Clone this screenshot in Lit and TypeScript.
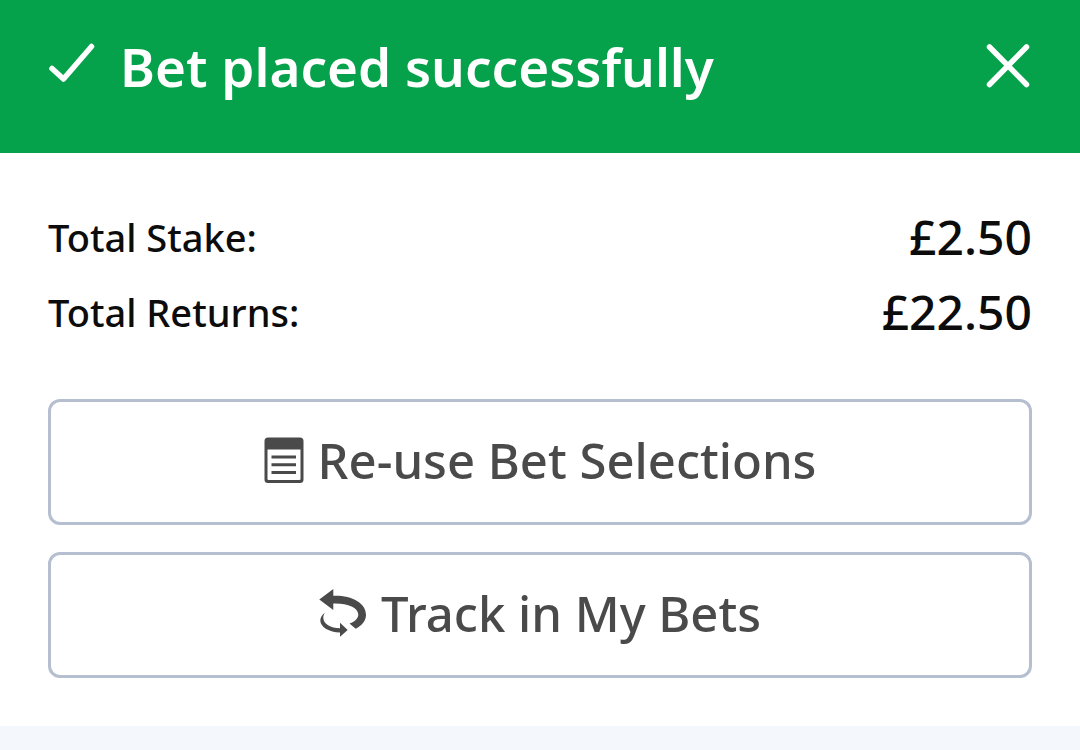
import { LitElement, html, css } from "lit";
import { customElement } from "lit/decorators.js";

@customElement("app-root")
export class AppRoot extends LitElement {
  static styles = css`
    :host {
      display: block;
      min-height: 100vh;
      background: #f4f8fd;
      font-family: "Noto Sans", "Open Sans", sans-serif;
      font-weight: 500;
    }
    svg {
      display: block;
      flex: none;
    }
    .header {
      display: flex;
      align-items: flex-start;
      padding: 31px 48px 50px;
      background: #06a14b;
      color: #fff;
    }
    .title {
      flex: 1;
      margin: 0 0 0 24px;
      font-size: 53px;
      line-height: 72px;
      font-weight: 600;
      white-space: nowrap;
    }
    .tick {
      margin-top: 9px;
    }
    button {
      font: inherit;
      cursor: pointer;
    }
    .close {
      margin-top: 11px;
      padding: 0;
      border: 0;
      background: none;
      color: inherit;
    }
    .panel {
      padding: 46px 48px 48px;
      background: #fff;
    }
    .totals {
      margin: 0 0 50px;
      color: #0c0c0c;
    }
    .row {
      display: flex;
      justify-content: space-between;
      align-items: center;
      height: 75px;
    }
    .label {
      font-size: 38px;
      line-height: 52px;
    }
    .value {
      margin: 0;
      font-size: 48px;
      line-height: 64px;
    }
    .actions {
      display: grid;
      gap: 27px;
    }
    .action {
      display: flex;
      align-items: center;
      justify-content: center;
      gap: 14px;
      padding: 25px 24px 29px;
      border: 3px solid #b5bfd0;
      border-radius: 12px;
      background: #fff;
      color: #4a4a4a;
      font-size: 49px;
      line-height: 66px;
      white-space: nowrap;
    }
  `;

  render() {
    return html`
      <header class="header">
        <svg class="tick" width="48" height="48" viewBox="0 0 48 48" fill="none" stroke="currentColor"
          stroke-width="5.500" stroke-linecap="round" stroke-linejoin="round" aria-hidden="true">
          <path d="M4 28.500L15.500 39L43.500 6.500" />
        </svg>
        <h1 class="title">Bet placed successfully</h1>
        <button class="close" type="button" aria-label="Close">
          <svg width="48" height="48" viewBox="0 0 48 48" fill="none" stroke="currentColor"
            stroke-width="5.500" stroke-linecap="round" aria-hidden="true">
            <path d="M5.500 5L42.500 42.500M42.500 5L5.500 42.500" />
          </svg>
        </button>
      </header>
      <main class="panel">
        <dl class="totals">
          <div class="row">
            <dt class="label">Total Stake:</dt>
            <dd class="value">£2.50</dd>
          </div>
          <div class="row">
            <dt class="label">Total Returns:</dt>
            <dd class="value">£22.50</dd>
          </div>
        </dl>
        <div class="actions">
          <button class="action" type="button">
            <svg width="40" height="46" viewBox="0 0 40 46" aria-hidden="true">
              <path fill="currentColor" fill-rule="evenodd"
                d="M4 0.500H36Q39.500 0.500 39.500 4V42.500Q39.500 46 36 46H4Q0.500 46 0.500 42.500V4Q0.500 0.500 4 0.500ZM3.500 12.500V42Q3.500 43 4.500 43H35.500Q36.500 43 36.500 42V12.500Z" />
              <path fill="none" stroke="currentColor" stroke-width="3"
                d="M7.500 20H32M7.500 27.700H32M7.500 35.500H32" />
            </svg>
            <span>Re-use Bet Selections</span>
          </button>
          <button class="action" type="button">
            <svg width="48" height="48" viewBox="0 0 48 48" fill="currentColor" aria-hidden="true">
              <path d="M0.300 10.500L14.300 0V6.700C32 6 47 13.500 47 26C47 31.500 43 36.500 36.700 39.700L30.500 34.500C36.500 32.500 39.300 29 39.300 25.500C39.300 18.500 28 14 14.300 14.500V21Z" />
              <path d="M6 23.500C0.500 32 9 39 21 39.300V33.700L28.700 41L21 47.700V43.500C6 43.500 -5.500 33 6 23.500Z" />
            </svg>
            <span>Track in My Bets</span>
          </button>
        </div>
      </main>
    `;
  }
}
